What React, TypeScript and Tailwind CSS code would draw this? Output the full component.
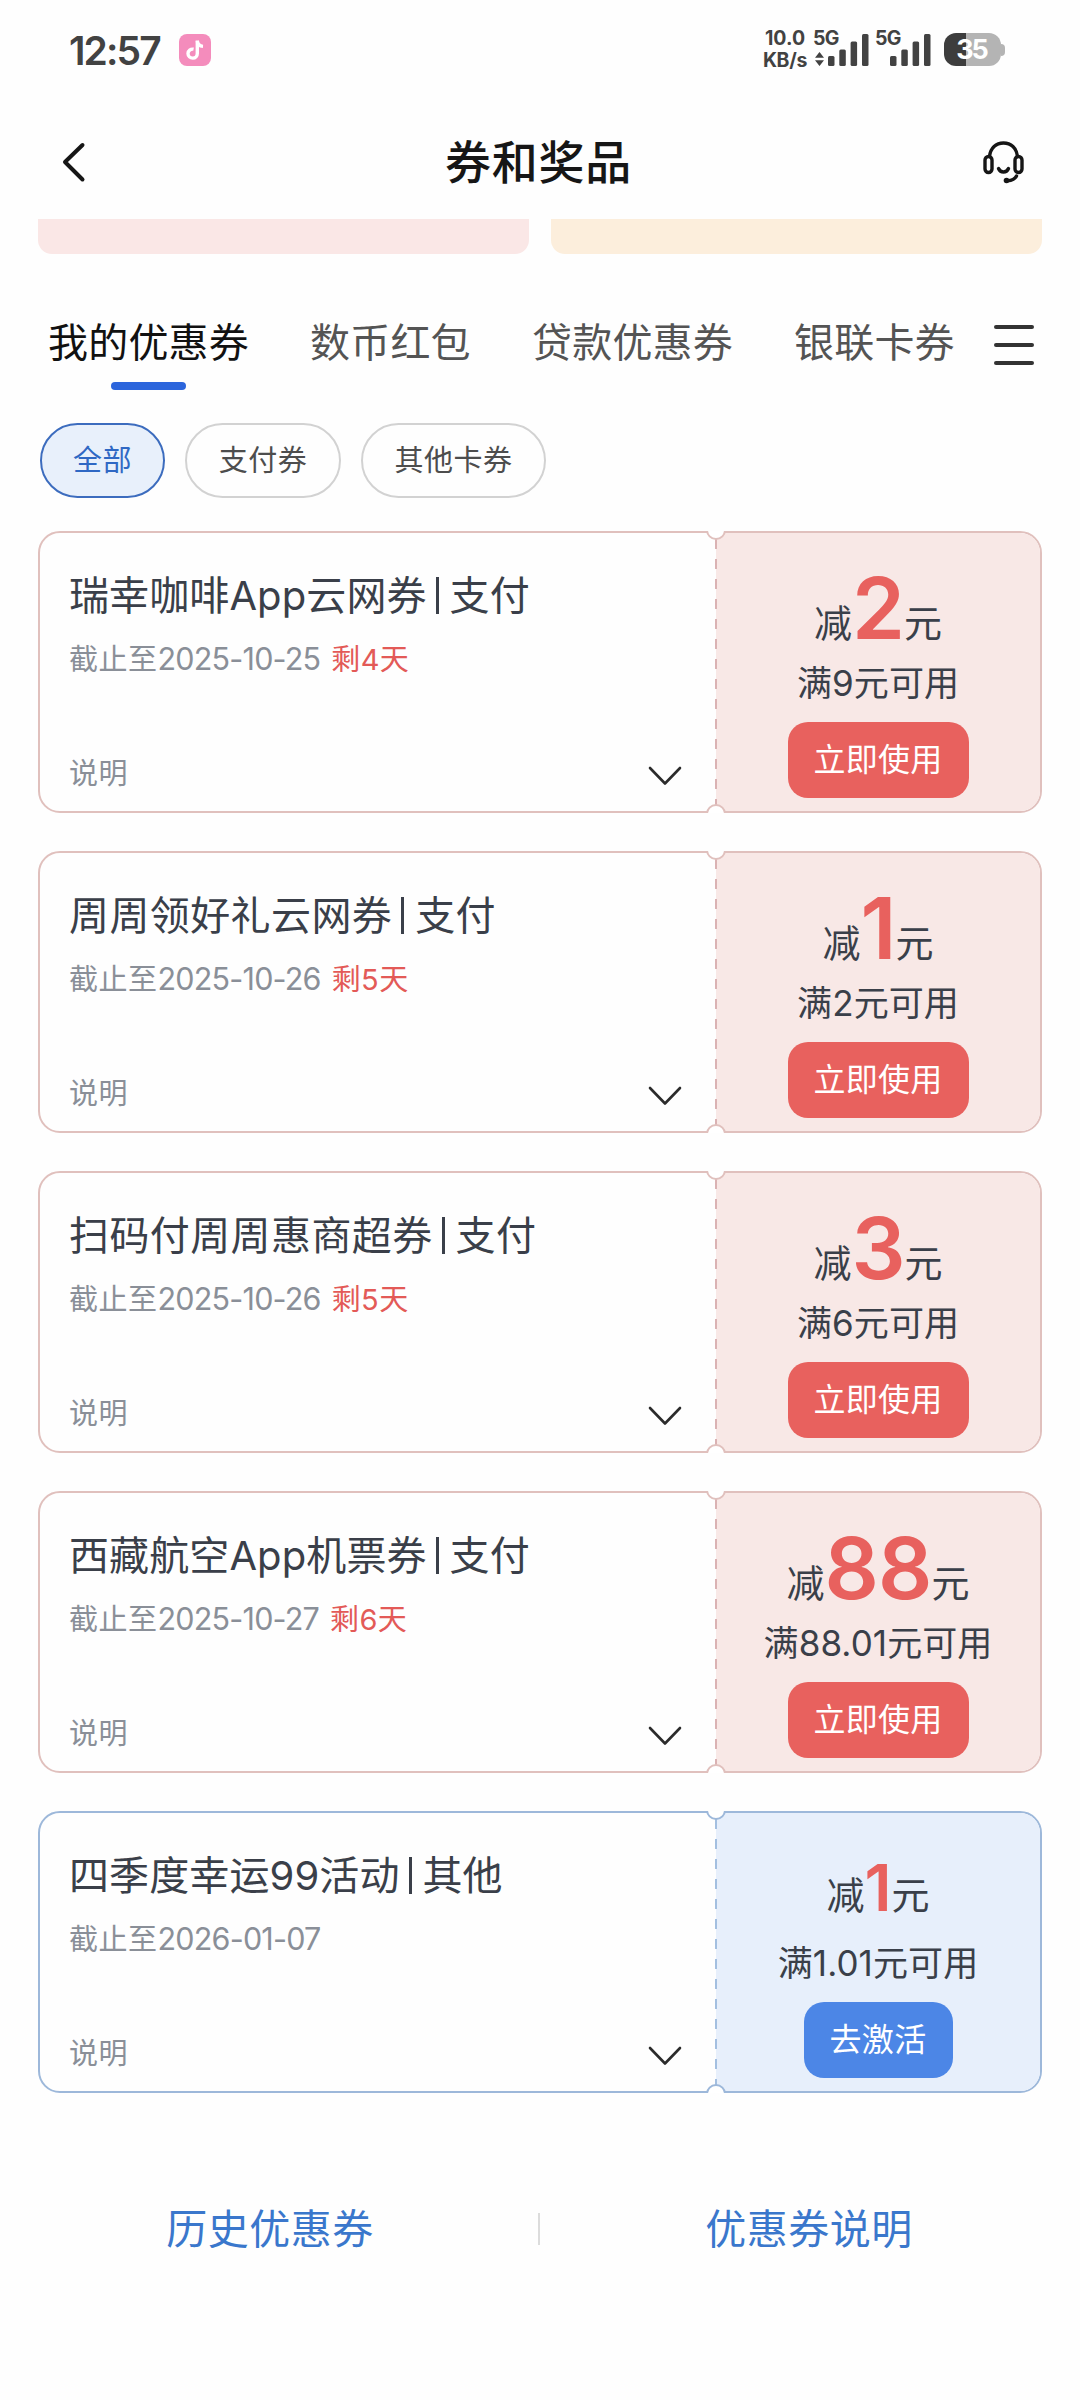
import React from "react";

type Coupon = {
  name: string;
  app?: boolean;
  kind: string;
  date: string;
  left?: string;
  amount: string;
  min: string;
  inactive?: boolean;
};

const coupons: Coupon[] = [
  { name: "瑞幸咖啡App云网券", app: true, kind: "支付", date: "2025-10-25", left: "剩4天", amount: "2", min: "9" },
  { name: "周周领好礼云网券", kind: "支付", date: "2025-10-26", left: "剩5天", amount: "1", min: "2" },
  { name: "扫码付周周惠商超券", kind: "支付", date: "2025-10-26", left: "剩5天", amount: "3", min: "6" },
  { name: "西藏航空App机票券", app: true, kind: "支付", date: "2025-10-27", left: "剩6天", amount: "88", min: "88.01" },
  { name: "四季度幸运99活动", app: true, kind: "其他", date: "2026-01-07", amount: "1", min: "1.01", inactive: true },
];

function Signal() {
  return (
    <svg width="41" height="32" viewBox="0 0 41 32" fill="#424242">
      <rect x="0" y="22" width="6.5" height="10" rx="1.5" />
      <rect x="11.3" y="15.5" width="6.5" height="16.5" rx="1.5" />
      <rect x="22.6" y="7.5" width="6.5" height="24.5" rx="1.5" />
      <rect x="34" y="0" width="6.5" height="32" rx="1.5" />
    </svg>
  );
}

function StatusBar() {
  return (
    <div className="flex h-[99px] items-center pr-[75px] pl-[69px] text-[#424242]">
      <span className="w-[110px] pt-[2px] text-[39px] leading-none font-semibold tracking-[-1.9px]">12:57</span>
      <div className="flex h-8 w-8 items-center justify-center rounded-lg bg-[#f48cbc]">
        <svg width="18" height="20" viewBox="0 0 18 20" fill="none" stroke="#fff" strokeWidth="3.4">
          <path d="M7.6 9.2C4.6 8.6 2 10.6 2 13.4c0 2.700 2.200 4.700 4.800 4.700s4.500-2 4.500-4.700V0.500" />
          <path d="M11.300 1c.3 3 2.600 5.200 5.700 5.400" />
        </svg>
      </div>
      <div className="ml-auto flex h-9 items-start">
        <div className="-mt-[6px] mr-[2px] w-[46px] pt-px text-center text-[19.500px] leading-[22.500px] font-bold">
          <div>10.0</div>
          <div className="tracking-[-0.300px]">KB/s</div>
        </div>
        <div className="relative ml-[3px] flex h-full w-[56px] items-end justify-end pb-[2px]">
          <span className="absolute -top-[5px] left-0 text-[19.500px] leading-[22px] font-bold tracking-[-0.800px]">5G</span>
          <svg className="mr-[4px]" width="9" height="14" viewBox="0 0 9 14" fill="#424242">
            <path d="M4.500 0 9 5.800H0zM4.500 14 0 8.200h9z" />
          </svg>
          <Signal />
        </div>
        <div className="relative ml-[6px] flex h-full w-[56px] items-end justify-end pb-[2px]">
          <span className="absolute -top-[5px] left-0 text-[19.500px] leading-[22px] font-bold tracking-[-0.800px]">5G</span>
          <Signal />
        </div>
        <div className="mt-[1.500px] ml-[13px] flex items-center">
          <div className="flex h-[33px] w-[57px] items-center justify-center rounded-[12px] bg-[linear-gradient(90deg,#3d3d3d_0_22px,#b4b4b4_22px)] pr-[2px] text-[27px] leading-none font-bold tracking-[-2px] text-white">
            35
          </div>
          <div className="h-3 w-1 rounded-r-full bg-[#b4b4b4]" />
        </div>
      </div>
    </div>
  );
}

function Header() {
  return (
    <div className="flex h-[120px] items-center justify-between pt-[5px] pr-[54px] pl-[61px] text-[#161616]">
      <svg width="42" height="42" viewBox="0 0 42 42" fill="none" stroke="currentColor" strokeWidth="4" strokeLinecap="round" strokeLinejoin="round">
        <path d="M21.500 4 4 21 21.500 38.500" />
      </svg>
      <h1 className="-translate-x-1 text-[46px] leading-none font-medium tracking-[0.700px]">券和奖品</h1>
      <svg width="44" height="44" viewBox="0 0 44 44" fill="none" stroke="currentColor" strokeWidth="3.400" strokeLinecap="round">
        <path d="M7.500 16.500C8.500 8 14 3 21.500 3s13 5 14 13.500" />
        <rect x="3" y="16.500" width="7" height="16" rx="3.500" />
        <rect x="33" y="16.500" width="7" height="16" rx="3.500" />
        <path d="M16.500 28.500c2 4.700 8 4.700 10 0" />
        <path d="M34.500 36c-1.500 3-4.500 4.500-9 4.800" />
        <circle cx="24.500" cy="40.500" r="2.800" fill="currentColor" stroke="none" />
      </svg>
    </div>
  );
}

function Tabs() {
  return (
    <div className="mt-[63px] flex h-[73px] items-start pl-[48px] text-[40px] leading-[52px] tracking-[0.200px] text-[#545454]">
      <div className="flex w-[262px] flex-col">
        <span className="text-[#111]">我的优惠券</span>
        <span className="mt-[13px] ml-[63px] h-2 w-[75px] rounded-full bg-[#2c65dc]" />
      </div>
      <span className="w-[222px]">数币红包</span>
      <span className="w-[262px]">贷款优惠券</span>
      <span className="w-[200px]">银联卡券</span>
      <div className="flex flex-col gap-[14px] pt-[8px]">
        <span className="h-1 w-10 rounded-full bg-[#333]" />
        <span className="h-1 w-10 rounded-full bg-[#333]" />
        <span className="h-1 w-10 rounded-full bg-[#333]" />
      </div>
    </div>
  );
}

function Chips() {
  return (
    <div className="mt-[33px] flex gap-5 pl-10 text-[29px] leading-none tracking-[0.500px] text-[#4d4d4d]">
      <div className="flex h-[75px] w-[125px] items-center justify-center rounded-full border-2 border-[#3c6cbe] bg-[#e8f0fb] text-[#2f68c4]">全部</div>
      <div className="flex h-[75px] w-[156px] items-center justify-center rounded-full border-2 border-[#d2d2d2]">支付券</div>
      <div className="flex h-[75px] w-[185px] items-center justify-center rounded-full border-2 border-[#d2d2d2]">其他卡券</div>
    </div>
  );
}

function CouponCard({ c }: { c: Coupon }) {
  const line = c.inactive ? "border-[#9db8da]" : "border-[#e0c0bd]";
  return (
    <div className={`relative flex h-[282px] rounded-[22px] border-2 ${line}`}>
      <div className="flex w-[676px] flex-col pr-[34px] pl-[29px] text-[#3a3f49]">
        <div className={`mt-[37px] flex text-[40px] leading-[52px] whitespace-nowrap ${c.app ? "tracking-[0.100px]" : "tracking-[0.400px]"}`}>
          <span>{c.name}</span>
          <span className="mt-[7px] mr-[11px] ml-[9px] h-[37px] w-[3px] bg-[#3a3f49]" />
          <span>{c.kind}</span>
        </div>
        <div className="mt-[17px] text-[29px] leading-10 tracking-[0.500px] text-[#8a8f98]">
          截止至
          <span className="text-[30.500px] tracking-[-0.800px]">{c.date}</span>
          {c.left && <span className="ml-[11px] tracking-[0.400px] text-[#e35a57]">{c.left}</span>}
        </div>
        <div className="mt-[74px] flex items-center justify-between text-[29px] leading-10 tracking-[0.500px] text-[#8a8f98]">
          说明
          <svg className="mt-[3px]" width="34" height="20" viewBox="0 0 34 20" fill="none" stroke="#2b2b2b" strokeWidth="2.600" strokeLinecap="round" strokeLinejoin="round">
            <path d="M2 2l15 15.500L32 2" />
          </svg>
        </div>
      </div>
      <div className={`flex flex-1 flex-col items-center rounded-r-[20px] text-[#3a3f49] ${c.inactive ? "bg-[#e7effb]" : "bg-[#f8e8e6]"}`}>
        <div className={`h-[60px] text-[38px] leading-[60px] whitespace-nowrap ${c.inactive ? "mt-[52px] mb-[16px]" : "mt-[60px] mb-[8px]"}`}>
          减
          <span className={`relative top-[2px] leading-[0px] font-semibold text-[#e8615e] ${c.inactive ? "text-[64px]" : "text-[85px] tracking-[-1px]"}`}>{c.amount}</span>
          元
        </div>
        <div className="text-[35px] leading-[44px] tracking-[0.100px] whitespace-nowrap">满{c.min}元可用</div>
        <button className={`mt-[17px] flex h-[76px] items-center justify-center rounded-[20px] text-[32px] leading-none tracking-[0.300px] text-white ${c.inactive ? "w-[149px] bg-[#4c86e6]" : "w-[181px] bg-[#e8615e]"}`}>
          {c.inactive ? "去激活" : "立即使用"}
        </button>
      </div>
      <div
        className={`absolute top-[6px] bottom-[6px] left-[675px] w-[2px] ${
          c.inactive
            ? "bg-[repeating-linear-gradient(180deg,#a3bfe0_0_10px,transparent_10px_20px)]"
            : "bg-[repeating-linear-gradient(180deg,#dab2b3_0_10px,transparent_10px_20px)]"
        }`}
      />
      <div className="absolute -top-[2px] left-[666px] h-[10px] w-5 overflow-hidden bg-transparent">
        <div className={`-mt-[11px] h-5 w-5 rounded-full border-2 bg-white ${line}`} />
      </div>
      <div className="absolute -bottom-[2px] left-[666px] h-[10px] w-5 overflow-hidden bg-transparent">
        <div className={`mt-px h-5 w-5 rounded-full border-2 bg-white ${line}`} />
      </div>
    </div>
  );
}

export default function App() {
  return (
    <div className="h-[2400px] w-[1080px] overflow-hidden bg-[#fefefe] font-['Inter','Noto_Sans_CJK_SC',sans-serif]">
      <StatusBar />
      <Header />
      <div className="flex gap-[22px] px-[38px]">
        <div className="h-[35px] flex-1 rounded-b-[14px] bg-[#fae7e6]" />
        <div className="h-[35px] flex-1 rounded-b-[14px] bg-[#fceedc]" />
      </div>
      <Tabs />
      <Chips />
      <div className="mt-[33px] flex flex-col gap-[38px] px-[38px]">
        {coupons.map((c, i) => (
          <CouponCard key={i} c={c} />
        ))}
      </div>
      <div className="mt-[106px] flex h-[60px] items-center text-[41px] leading-none tracking-[0.500px] text-[#3a77cc]">
        <span className="w-[538px] pl-[2px] text-center">历史优惠券</span>
        <span className="h-8 w-[2px] bg-[#dcdcdc]" />
        <span className="flex-1 pr-[2px] text-center">优惠券说明</span>
      </div>
    </div>
  );
}
